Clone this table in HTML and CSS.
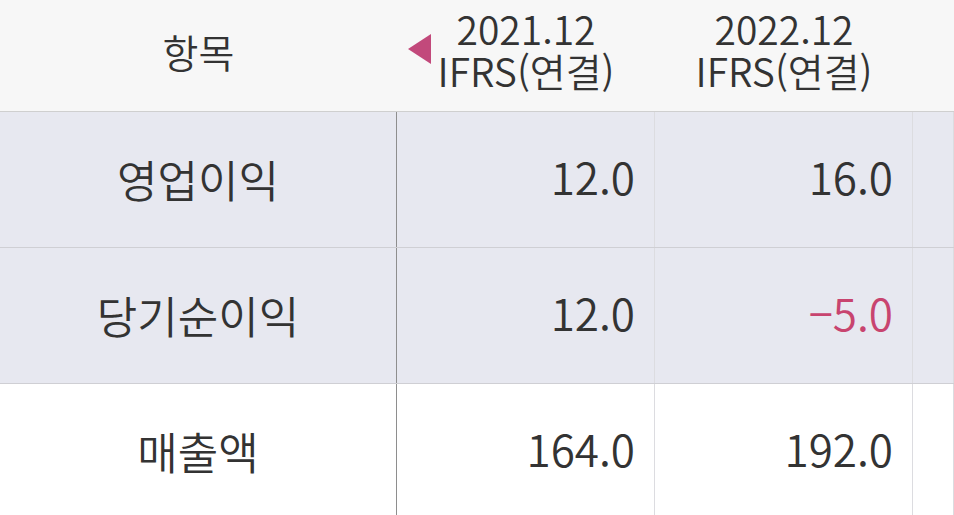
FILE: index.html
```html
<!DOCTYPE html>
<html lang="ko">
<head>
<meta charset="utf-8">
<title>재무 요약</title>
<link rel="stylesheet" href="styles.css">
</head>
<body>
<div class="table">
  <div class="row head">
    <div class="cell label">항목</div>
    <div class="cell period">
      <span class="arrow"></span>
      <div class="period-text">
        <div class="line">2021.12</div>
        <div class="line">IFRS(연결)</div>
      </div>
    </div>
    <div class="cell period">
      <div class="period-text">
        <div class="line">2022.12</div>
        <div class="line">IFRS(연결)</div>
      </div>
    </div>
    <div class="cell"></div>
  </div>
  <div class="row shaded">
    <div class="cell label">영업이익</div>
    <div class="cell num">12.0</div>
    <div class="cell num">16.0</div>
    <div class="cell"></div>
  </div>
  <div class="row shaded">
    <div class="cell label">당기순이익</div>
    <div class="cell num">12.0</div>
    <div class="cell num neg">−5.0</div>
    <div class="cell"></div>
  </div>
  <div class="row">
    <div class="cell label">매출액</div>
    <div class="cell num">164.0</div>
    <div class="cell num">192.0</div>
    <div class="cell"></div>
  </div>
</div>
</body>
</html>
```

FILE: styles.css
```css
html, body {
  margin: 0;
  padding: 0;
  background: #ffffff;
}
body {
  font-family: "Noto Sans CJK KR", "Noto Sans", sans-serif;
  font-weight: 350;
  color: #333333;
  overflow: hidden;
}
.table {
  width: 954px;
}
.row {
  display: grid;
  grid-template-columns: 397px 258px 258px 1fr;
  height: 135px;
  border-bottom: 1px solid #cfcfd4;
  background: #ffffff;
}
.row.shaded {
  background: #e7e8f0;
}
.row.head {
  height: 111px;
  background: #f7f7f7;
  border-bottom: 1px solid #cfcfcf;
}
.cell {
  display: flex;
  align-items: center;
  border-right: 1px solid #dcdce0;
  font-size: 44px;
  position: relative;
}
.row .cell:first-child {
  border-right: 1px solid #8e8e8e;
}
.row.head .cell {
  border-right: none;
}
.label {
  justify-content: center;
  padding-bottom: 2px;
}
.row.head .label {
  font-size: 39px;
  padding-bottom: 10px;
}
.num {
  justify-content: flex-end;
  padding-right: 19px;
  padding-bottom: 8px;
}
.neg {
  color: #c8446f;
}
.period {
  justify-content: center;
}
.period-text {
  font-size: 39px;
  text-align: center;
  padding-bottom: 14px;
}
.line {
  line-height: 42px;
  height: 42px;
}
.arrow {
  position: absolute;
  left: 11px;
  top: 34px;
  width: 0;
  height: 0;
  border-top: 15px solid transparent;
  border-bottom: 15px solid transparent;
  border-right: 23px solid #c2497b;
}
```
